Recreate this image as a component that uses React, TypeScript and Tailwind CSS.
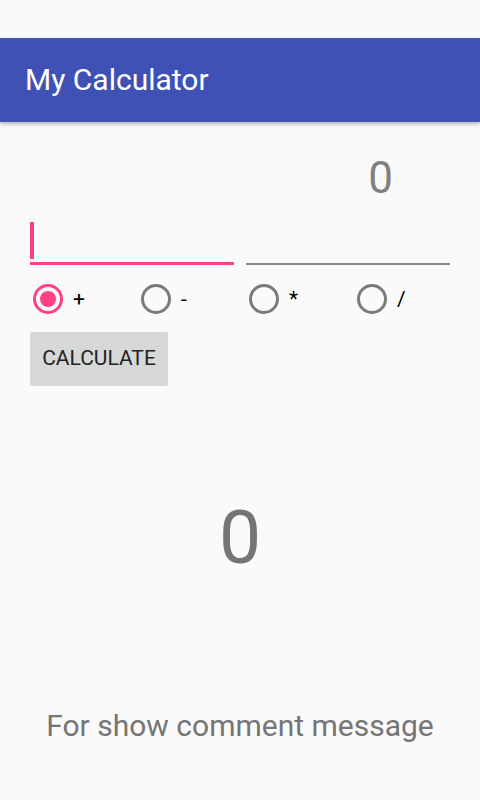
import { useState } from 'react'

const ops = ['+', '-', '*', '/']

export default function App() {
  const [op, setOp] = useState('+')

  return (
    <div className="flex h-[800px] w-[480px] flex-col bg-[#fafafa] font-['Roboto',sans-serif]">
      <div className="h-[38px] shrink-0" />
      <header className="flex h-[84px] shrink-0 items-center bg-[#3f51b5] px-[25px] shadow-[0_2px_4px_rgba(0,0,0,0.3)]">
        <h1 className="text-[30px] leading-none text-white">My Calculator</h1>
      </header>

      <main className="flex flex-1 flex-col px-[30px]">
        <div className="flex h-[78px] items-end justify-end pr-[57px]">
          <span className="text-[44px] leading-none text-[#808080]">0</span>
        </div>

        <div className="mt-[22px] flex gap-[12px]">
          <div className="flex h-[43px] w-[204px] items-stretch border-b-[3px] border-[#ff4081]">
            <span className="mb-[3px] w-[4px] bg-[#ff4081]" />
          </div>
          <div className="h-[43px] w-[204px] border-b-2 border-[#888888]" />
        </div>

        <div className="mt-[19px] flex">
          {ops.map((o) => (
            <button key={o} onClick={() => setOp(o)} className="flex w-[108px] shrink-0 items-center gap-[10px] pl-[3px]">
              {op === o ? (
                <span className="flex h-[30px] w-[30px] items-center justify-center rounded-full border-[3px] border-[#ff4081]">
                  <span className="h-[16px] w-[16px] rounded-full bg-[#ff4081]" />
                </span>
              ) : (
                <span className="h-[30px] w-[30px] rounded-full border-[3px] border-[#7a7a7a]" />
              )}
              <span className="text-[21px] leading-none text-black">{o}</span>
            </button>
          ))}
        </div>

        <div className="mt-[18px]">
          <button className="h-[54px] w-[138px] rounded-[2px] bg-[#d6d7d7] text-[21px] text-[#222222]">CALCULATE</button>
        </div>

        <div className="mt-[114px] flex justify-center">
          <span className="text-[75px] leading-none text-[#757575]">0</span>
        </div>

        <div className="mt-[136px] flex justify-center">
          <span className="text-[30px] leading-none text-[#757575]">For show comment message</span>
        </div>
      </main>
    </div>
  )
}
